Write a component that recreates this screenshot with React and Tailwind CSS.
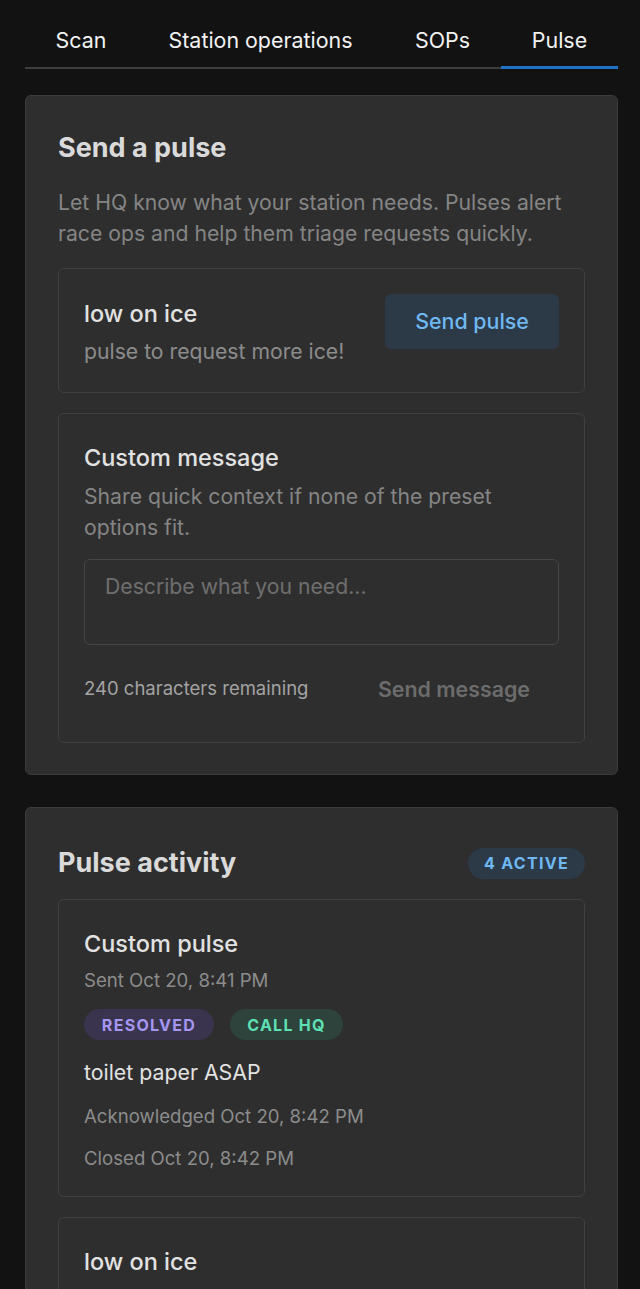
export default function App() {
  const tabs = [
    ["Scan", "w-[112px]"],
    ["Station operations", "w-[247px]"],
    ["SOPs", "w-[117px]"],
  ];
  return (
    <div className="min-h-screen bg-[#121212] font-['Inter',sans-serif] pb-10">
      <div className="ml-[25px] w-[593px] pt-[26px]">
        <div className="flex border-b-2 border-[#3e3e3e]">
          {tabs.map(([t, w]) => (
            <div
              key={t}
              className={`${w} shrink-0 whitespace-nowrap text-center pb-[12px] text-[21.4px] leading-[28px] text-[#f2f2f2]`}
            >
              {t}
            </div>
          ))}
          <div className="flex-1 whitespace-nowrap text-center pb-[12px] text-[21.4px] leading-[28px] text-[#f2f2f2] border-b-[3px] border-[#1f72c8] -mb-[2px]">
            Pulse
          </div>
        </div>

        <div className="mt-[26px] rounded-[6px] border border-[#3b3b3b] bg-[#2e2e2e] px-[32px] pt-[35px] pb-[31px]">
          <h2 className="text-[27px] leading-[34px] font-bold text-[#dadada]">Send a pulse</h2>
          <p className="mt-[22px] text-[21.2px] leading-[31px] text-[#858585]">
            Let HQ know what your station needs. Pulses alert race ops and help them triage requests quickly.
          </p>

          <div className="mt-[19px] flex items-start justify-between rounded-[6px] border border-[#404040] bg-[#2e2e2e] p-[25px]">
            <div className="pt-[5px] pb-[2px]">
              <div className="text-[23.5px] leading-[30px] font-medium text-[#e2e2e2]">low on ice</div>
              <div className="mt-[8px] text-[21.2px] leading-[28px] text-[#8c8c8c]">pulse to request more ice!</div>
            </div>
            <button className="h-[55px] w-[174px] rounded-[6px] bg-[#2c3a48] text-[21.4px] font-medium text-[#6fb8f2]">
              Send pulse
            </button>
          </div>

          <div className="mt-[20px] rounded-[6px] border border-[#404040] bg-[#2e2e2e] px-[25px] pt-[29px] pb-[26px]">
            <div className="text-[23.5px] leading-[30px] font-medium text-[#e2e2e2]">Custom message</div>
            <p className="mt-[8px] text-[21.2px] leading-[31px] text-[#858585]">
              Share quick context if none of the preset options fit.
            </p>
            <div className="mt-[16px] h-[86px] rounded-[6px] border border-[#464646] bg-[#2e2e2e] px-[20px] pt-[12px] text-[21.2px] leading-[28px] text-[#6e6e6e]">
              Describe what you need...
            </div>
            <div className="mt-[17px] flex items-center justify-between">
              <span className="text-[18.5px] text-[#a3a3a3]">240 characters remaining</span>
              <button className="h-[54px] px-[29px] text-[21.4px] font-semibold text-[#6c6c6c]">Send message</button>
            </div>
          </div>
        </div>

        <div className="mt-[32px] rounded-[6px] border border-[#3b3b3b] bg-[#2e2e2e] px-[32px] pt-[38px] pb-[31px]">
          <div className="flex items-center justify-between">
            <h2 className="text-[27px] leading-[34px] font-bold text-[#dadada]">Pulse activity</h2>
            <span className="flex h-[31px] w-[117px] items-center justify-center rounded-full bg-[#2c3a48] text-[16px] font-bold tracking-[0.08em] text-[#6fb8f2]">
              4 ACTIVE
            </span>
          </div>

          <div className="mt-[19px] rounded-[6px] border border-[#404040] bg-[#2e2e2e] px-[25px] pt-[29px] pb-[26px]">
            <div className="text-[23.5px] leading-[30px] font-medium text-[#e2e2e2]">Custom pulse</div>
            <div className="mt-[9px] text-[18.6px] leading-[24px] text-[#8c8c8c]">Sent Oct 20, 8:41 PM</div>
            <div className="mt-[17px] flex gap-[16px]">
              <span className="flex h-[31px] w-[130px] items-center justify-center rounded-full bg-[#3a344f] text-[16px] font-bold tracking-[0.08em] text-[#a596f2]">
                RESOLVED
              </span>
              <span className="flex h-[31px] w-[113px] items-center justify-center rounded-full bg-[#2d433b] text-[16px] font-bold tracking-[0.08em] text-[#5fe0b4]">
                CALL HQ
              </span>
            </div>
            <div className="mt-[18px] text-[21.3px] leading-[28px] text-[#e2e2e2]">toilet paper ASAP</div>
            <div className="mt-[18px] text-[18.6px] leading-[24px] text-[#8c8c8c]">Acknowledged Oct 20, 8:42 PM</div>
            <div className="mt-[18px] text-[18.6px] leading-[24px] text-[#8c8c8c]">Closed Oct 20, 8:42 PM</div>
          </div>

          <div className="mt-[20px] rounded-[6px] border border-[#404040] bg-[#2e2e2e] px-[25px] pt-[29px] pb-[40px]">
            <div className="text-[23.5px] leading-[30px] font-medium text-[#e2e2e2]">low on ice</div>
          </div>
        </div>
      </div>
    </div>
  );
}
